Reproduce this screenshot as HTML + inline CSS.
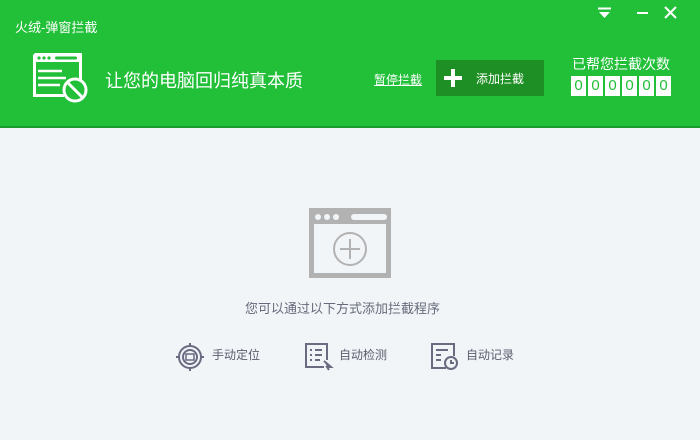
<!DOCTYPE html>
<html><head><meta charset="utf-8"><style>
*{margin:0;padding:0;box-sizing:border-box}
body{width:700px;height:440px;overflow:hidden;background:#f2f5f8;font-family:"Liberation Sans","Noto Sans CJK SC",sans-serif;position:relative}
.hd{position:absolute;left:0;top:0;width:700px;height:128px;background:#22bf38;border-bottom:2px solid #1a9a2c}
.a{position:absolute;white-space:nowrap}
.dg{position:absolute;top:76px;width:15px;height:20px;background:#fff;color:#22bf38;font-size:15px;text-align:center;line-height:20px}
.lb{position:absolute;top:346px;font-size:12px;color:#5a5d6e}
</style></head><body>
<div class="hd"></div>
<div class="a" style="left:15px;top:17px;font-size:13px;color:#fff">火绒-弹窗拦截</div>
<svg class="a" style="left:30px;top:50px" width="60" height="54" viewBox="0 0 60 54">
<path d="M4.5 4.5H50.5V32M34 45.5H4.5V4.5" fill="none" stroke="#fff" stroke-width="3"/>
<rect x="4" y="4" width="47" height="8" fill="#fff"/>
<circle cx="9" cy="8" r="1.6" fill="#22bf38"/><circle cx="14" cy="8" r="1.6" fill="#22bf38"/><circle cx="19" cy="8" r="1.6" fill="#22bf38"/>
<rect x="25" y="6.5" width="22" height="3" rx="1.5" fill="#22bf38"/>
<path d="M8 21H32M8 28H36M8 35H30" stroke="#fff" stroke-width="2.5"/>
<circle cx="45" cy="40" r="11" fill="#22bf38" stroke="#fff" stroke-width="3"/>
<path d="M38 33L52 47" stroke="#fff" stroke-width="3"/>
</svg>
<div class="a" style="left:105px;top:67px;font-size:18px;color:#fff">让您的电脑回归纯真本质</div>
<div class="a" style="left:374px;top:71px;font-size:12px;color:#fff;text-decoration:underline">暂停拦截</div>
<div class="a" style="left:436px;top:60px;width:108px;height:36px;background:#1e8f24"></div>
<svg class="a" style="left:444px;top:68px" width="18" height="20"><path d="M9 1V19M0 10H18" stroke="#fff" stroke-width="4"/></svg>
<div class="a" style="left:476px;top:70px;font-size:12px;color:#fff">添加拦截</div>
<div class="a" style="left:572px;top:54px;font-size:14px;color:#fff">已帮您拦截次数</div>
<div class="dg" style="left:571px">0</div><div class="dg" style="left:588px">0</div><div class="dg" style="left:605px">0</div><div class="dg" style="left:622px">0</div><div class="dg" style="left:639px">0</div><div class="dg" style="left:656px">0</div>
<svg class="a" style="left:598px;top:7px" width="14" height="12"><path d="M0 1.5H13" stroke="#fff" stroke-width="2"/><path d="M1 5H12L6.5 11Z" fill="#fff"/></svg>
<svg class="a" style="left:636px;top:7px" width="14" height="12"><path d="M1 6H12" stroke="#fff" stroke-width="2"/></svg>
<svg class="a" style="left:664px;top:6px" width="14" height="13"><path d="M1 1L12 12M12 1L1 12" stroke="#fff" stroke-width="2"/></svg>
<svg class="a" style="left:309px;top:208px" width="82" height="70" viewBox="0 0 82 70">
<rect x="2.5" y="2.5" width="77" height="65" fill="none" stroke="#b2b2b2" stroke-width="5"/>
<rect x="2" y="2" width="78" height="14" fill="#b2b2b2"/>
<circle cx="9" cy="9" r="3" fill="#f2f5f8"/><circle cx="18" cy="9" r="3" fill="#f2f5f8"/><circle cx="27" cy="9" r="3" fill="#f2f5f8"/>
<rect x="42" y="6" width="36" height="6" rx="3" fill="#f2f5f8"/>
<circle cx="41" cy="41" r="16" fill="none" stroke="#b2b2b2" stroke-width="2"/>
<path d="M41 31V51M31 41H51" stroke="#b2b2b2" stroke-width="2"/>
</svg>
<div class="a" style="left:245px;top:298px;font-size:13px;color:#666a7a">您可以通过以下方式添加拦截程序</div>
<svg class="a" style="left:175px;top:342px" width="30" height="30" viewBox="0 0 30 30" fill="none" stroke="#6a6a80" stroke-width="2">
<circle cx="15" cy="15" r="11"/><circle cx="15" cy="15" r="7"/><rect x="11" y="12" width="8" height="6" stroke-width="1.5"/>
<path d="M15 1V5M15 25V29M1 15H5M25 15H29"/></svg>
<div class="lb" style="left:212px">手动定位</div>
<svg class="a" style="left:304px;top:342px" width="30" height="30" viewBox="0 0 30 30" fill="none" stroke="#6a6a80" stroke-width="2">
<path d="M20 25H2V2H23V18"/><path d="M6 8H8M11 8H18M6 13H8M11 13H18M6 18H8M11 18H16" /><path d="M20 19L27 25H23L25 28" fill="#6a6a80"/></svg>
<div class="lb" style="left:339px">自动检测</div>
<svg class="a" style="left:430px;top:342px" width="30" height="30" viewBox="0 0 30 30" fill="none" stroke="#6a6a80" stroke-width="2">
<path d="M16 26H2V2H24V14"/><path d="M6 8H18M6 13H11M6 18H11"/><circle cx="21" cy="21" r="6"/><path d="M21 18V21H24"/></svg>
<div class="lb" style="left:466px">自动记录</div>
</body></html>
